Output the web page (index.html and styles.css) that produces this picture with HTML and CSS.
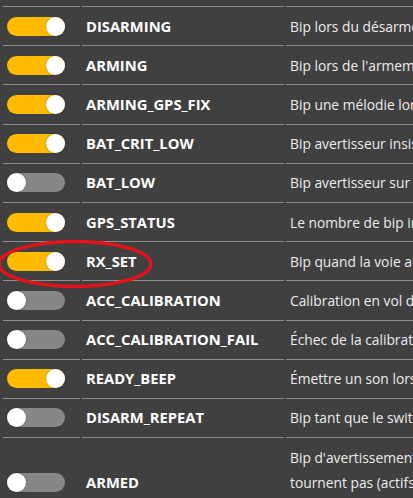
FILE: index.html
```html
<!DOCTYPE html>
<html lang="fr">
<head>
<meta charset="utf-8">
<title>Beepers</title>
<link rel="stylesheet" href="styles.css">
</head>
<body>
<div class="wrap">
<table class="beepers">
<tbody>
<tr><td class="sw"><span class="toggle on"></span></td><td class="name">DISARMING</td><td class="desc">Bip lors du désarmement de l'appareil.</td></tr>
<tr><td class="sw"><span class="toggle on"></span></td><td class="name">ARMING</td><td class="desc">Bip lors de l'armement de l'appareil.</td></tr>
<tr><td class="sw"><span class="toggle on"></span></td><td class="name">ARMING_GPS_FIX</td><td class="desc">Bip une mélodie lors de l'armement avec fix GPS.</td></tr>
<tr><td class="sw"><span class="toggle on"></span></td><td class="name">BAT_CRIT_LOW</td><td class="desc">Bip avertisseur insistant lorsque la batterie est critique.</td></tr>
<tr><td class="sw"><span class="toggle"></span></td><td class="name">BAT_LOW</td><td class="desc">Bip avertisseur sur batterie faible.</td></tr>
<tr><td class="sw"><span class="toggle on"></span></td><td class="name">GPS_STATUS</td><td class="desc">Le nombre de bip indique le nombre de satellites GPS trouvés.</td></tr>
<tr><td class="sw"><span class="toggle on"></span></td><td class="name">RX_SET</td><td class="desc">Bip quand la voie aux est réglée sur beep.</td></tr>
<tr><td class="sw"><span class="toggle"></span></td><td class="name">ACC_CALIBRATION</td><td class="desc">Calibration en vol de l'accéléromètre terminée.</td></tr>
<tr><td class="sw"><span class="toggle"></span></td><td class="name">ACC_CALIBRATION_FAIL</td><td class="desc">Échec de la calibration en vol de l'accéléromètre.</td></tr>
<tr><td class="sw"><span class="toggle on"></span></td><td class="name">READY_BEEP</td><td class="desc">Émettre un son lorsque le GPS est verrouillé et prêt.</td></tr>
<tr><td class="sw"><span class="toggle"></span></td><td class="name">DISARM_REPEAT</td><td class="desc">Bip tant que le switch d'armement est sur armé.</td></tr>
<tr><td class="sw"><span class="toggle"></span></td><td class="name">ARMED</td><td class="desc">Bip d'avertissement lorsque armé et que les moteurs ne<br>tournent pas (actifs jusqu'à ce que les gaz soient levés<br>ou que l'appareil soit désarmé).</td></tr>
</tbody>
</table>
<svg class="mark" width="160" height="54" viewBox="0 0 160 54" aria-hidden="true">
<ellipse cx="77" cy="26" rx="76" ry="22.5" fill="none" stroke="#e3121c" stroke-width="3.4"/>
</svg>
</div>
</body>
</html>
```
FILE: styles.css
```css
html, body {
  margin: 0;
  padding: 0;
  background: #404040;
  overflow: hidden;
  width: 413px;
  height: 498px;
}
.wrap {
  position: relative;
  padding: 6px 0 0 1px;
}
.beepers {
  border-collapse: separate;
  border-spacing: 2px 0;
  font-family: "Open Sans", "Liberation Sans", sans-serif;
  width: 900px;
  table-layout: fixed;
}
.beepers td {
  border-top: 1px solid #8e8e8e;
  padding: 6.6px 4px;
  line-height: 25px;
  vertical-align: middle;
}
.sw { width: 69px; }
.name {
  width: 194px;
  color: #ffffff;
  font-weight: 700;
  font-size: 14.75px;
  white-space: nowrap;
}
.desc {
  color: #ececec;
  font-size: 13.8px;
  white-space: nowrap;
}
.toggle {
  display: block;
  position: relative;
  width: 58px;
  height: 19px;
  border-radius: 10px;
  background: #878787;
}
.toggle.on { background: #ffbb00; }
.toggle::after {
  content: "";
  position: absolute;
  top: 0;
  left: 0;
  width: 19px;
  height: 19px;
  border-radius: 50%;
  background: #ffffff;
  box-shadow: 0 0 2px rgba(0,0,0,0.35);
}
.toggle.on::after { left: 39px; }
.mark {
  position: absolute;
  left: -2px;
  top: 238px;
}
```
